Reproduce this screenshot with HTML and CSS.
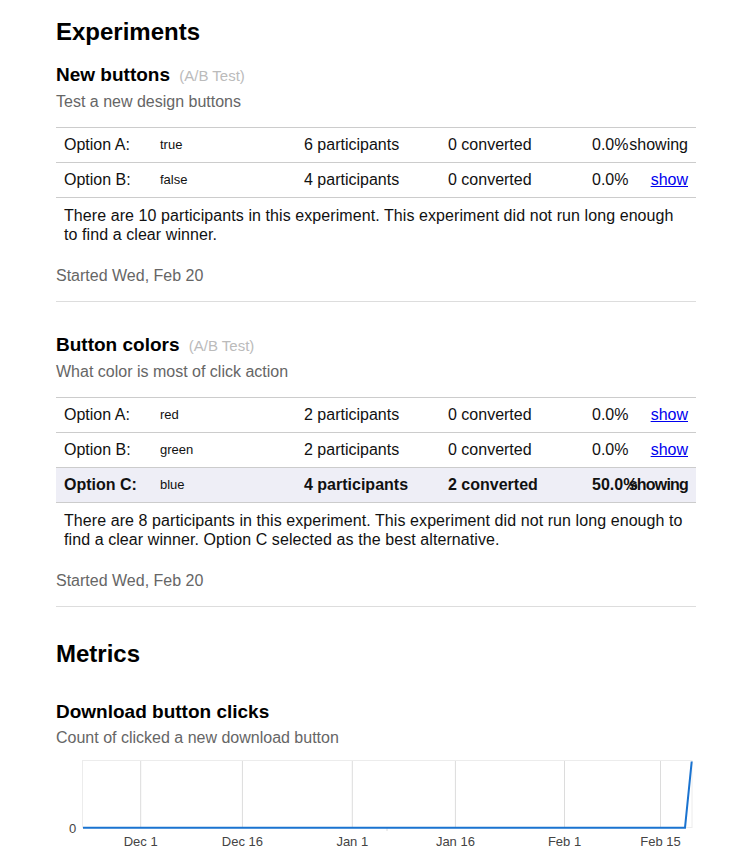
FILE: index.html
```html
<!DOCTYPE html>
<html lang="en">
<head>
<meta charset="utf-8">
<title>Experiments</title>
<link rel="stylesheet" href="styles.css">
</head>
<body>
<div class="page">
  <h1 class="title">Experiments</h1>

  <section class="experiment">
    <h2 class="exp-name">New buttons <span class="exp-type">(A/B Test)</span></h2>
    <p class="exp-desc">Test a new design buttons</p>
    <table class="alts">
      <colgroup>
        <col class="c-label"><col class="c-value"><col class="c-num"><col class="c-num"><col class="c-rate"><col class="c-action">
      </colgroup>
      <tr>
        <td>Option A:</td><td class="val">true</td><td>6 participants</td><td>0 converted</td><td>0.0%</td><td class="act">showing</td>
      </tr>
      <tr>
        <td>Option B:</td><td class="val">false</td><td>4 participants</td><td>0 converted</td><td>0.0%</td><td class="act"><a href="#">show</a></td>
      </tr>
      <tr>
        <td class="summary" colspan="6">There are 10 participants in this experiment. This experiment did not run long enough to find a clear winner.</td>
      </tr>
    </table>
    <p class="started">Started Wed, Feb 20</p>
  </section>
  <div class="rule"></div>

  <section class="experiment">
    <h2 class="exp-name">Button colors <span class="exp-type">(A/B Test)</span></h2>
    <p class="exp-desc">What color is most of click action</p>
    <table class="alts">
      <colgroup>
        <col class="c-label"><col class="c-value"><col class="c-num"><col class="c-num"><col class="c-rate"><col class="c-action">
      </colgroup>
      <tr>
        <td>Option A:</td><td class="val">red</td><td>2 participants</td><td>0 converted</td><td>0.0%</td><td class="act"><a href="#">show</a></td>
      </tr>
      <tr>
        <td>Option B:</td><td class="val">green</td><td>2 participants</td><td>0 converted</td><td>0.0%</td><td class="act"><a href="#">show</a></td>
      </tr>
      <tr class="best">
        <td>Option C:</td><td class="val">blue</td><td>4 participants</td><td>2 converted</td><td>50.0%</td><td class="act">showing</td>
      </tr>
      <tr>
        <td class="summary" colspan="6">There are 8 participants in this experiment. This experiment did not run long enough to find a clear winner. Option C selected as the best alternative.</td>
      </tr>
    </table>
    <p class="started">Started Wed, Feb 20</p>
  </section>
  <div class="rule rule-last"></div>

  <h1 class="title metrics-title">Metrics</h1>
  <section class="metric">
    <h2 class="metric-name">Download button clicks</h2>
    <p class="exp-desc">Count of clicked a new download button</p>
    <svg class="chart" width="640" height="112" viewBox="0 0 640 112">
      <rect x="26.5" y="13.5" width="609.5" height="67" fill="none" stroke="#ececec" stroke-width="1"/>
      <g stroke="#dcdcdc" stroke-width="1">
        <line x1="84.7" y1="14" x2="84.7" y2="80.5"/>
        <line x1="186.4" y1="14" x2="186.4" y2="80.5"/>
        <line x1="296.3" y1="14" x2="296.3" y2="80.5"/>
        <line x1="399.4" y1="14" x2="399.4" y2="80.5"/>
        <line x1="508.5" y1="14" x2="508.5" y2="80.5"/>
        <line x1="604.5" y1="14" x2="604.5" y2="80.5"/>
      </g>
      <line x1="331" y1="81" x2="331" y2="84" stroke="#dcdcdc" stroke-width="1"/>
      <polyline points="27,80.7 629,80.7 635.7,14.5" fill="none" stroke="#1a73d0" stroke-width="2"/>
      <g class="axis-text">
        <text x="20.3" y="86" text-anchor="end">0</text>
        <text x="84.7" y="99" text-anchor="middle">Dec 1</text>
        <text x="186.4" y="99" text-anchor="middle">Dec 16</text>
        <text x="296.3" y="99" text-anchor="middle">Jan 1</text>
        <text x="399.4" y="99" text-anchor="middle">Jan 16</text>
        <text x="508.5" y="99" text-anchor="middle">Feb 1</text>
        <text x="604.5" y="99" text-anchor="middle">Feb 15</text>
      </g>
    </svg>
  </section>
</div>
</body>
</html>
```

FILE: styles.css
```css
html, body {
  margin: 0;
  padding: 0;
  background: #ffffff;
}

body {
  font-family: "Liberation Sans", Arial, Helvetica, sans-serif;
  font-size: 16px;
  line-height: 18px;
  color: #111111;
}

.page {
  width: 640px;
  margin-left: 56px;
  padding-top: 18px;
}

.title {
  margin: 0 0 18px;
  font-size: 24px;
  line-height: 28px;
  font-weight: bold;
  color: #000000;
}

.metrics-title {
  margin-bottom: 33px;
}

.exp-name,
.metric-name {
  margin: 0 0 7px;
  font-size: 19px;
  line-height: 22px;
  height: 22px;
  font-weight: bold;
  color: #000000;
}

.metric-name {
  margin-bottom: 6px;
}

.exp-type {
  margin-left: 4px;
  font-size: 15px;
  line-height: 1;
  font-weight: normal;
  color: #bbbbbb;
}

.exp-desc {
  margin: 0 0 16px;
  color: #666666;
}

.metric .exp-desc {
  margin-bottom: 0;
}

.alts {
  width: 640px;
  table-layout: fixed;
  border-collapse: separate;
  border-spacing: 0;
  margin-bottom: 15px;
}

.c-label { width: 96px; }
.c-value { width: 144px; }
.c-num { width: 144px; }
.c-rate { width: 36px; }
.c-action { width: 76px; }

.alts td {
  padding: 8px;
  border-top: 1px solid #cccccc;
  line-height: 18px;
  white-space: nowrap;
  vertical-align: middle;
  overflow: visible;
}

.alts td.val {
  font-size: 13px;
}

.alts td.act {
  text-align: right;
}

.alts td.act a {
  color: #0000ee;
  text-decoration: underline;
}

.alts tr.best td {
  background: #eeeef6;
  font-weight: bold;
}

.alts tr.best td.val {
  font-weight: normal;
}

.alts tr.best td.act {
  letter-spacing: -0.8px;
}

.alts td.summary {
  white-space: normal;
  line-height: 19px;
  letter-spacing: 0.08px;
}

.started {
  margin: 0;
  color: #666666;
}

.rule {
  height: 0;
  border-top: 1px solid #dddddd;
  margin: 16px 0 32px;
}

.rule-last {
  margin-bottom: 33px;
}

.chart {
  display: block;
}

.axis-text text {
  font-family: "Liberation Sans", Arial, sans-serif;
  font-size: 13px;
  fill: #444444;
}
```
